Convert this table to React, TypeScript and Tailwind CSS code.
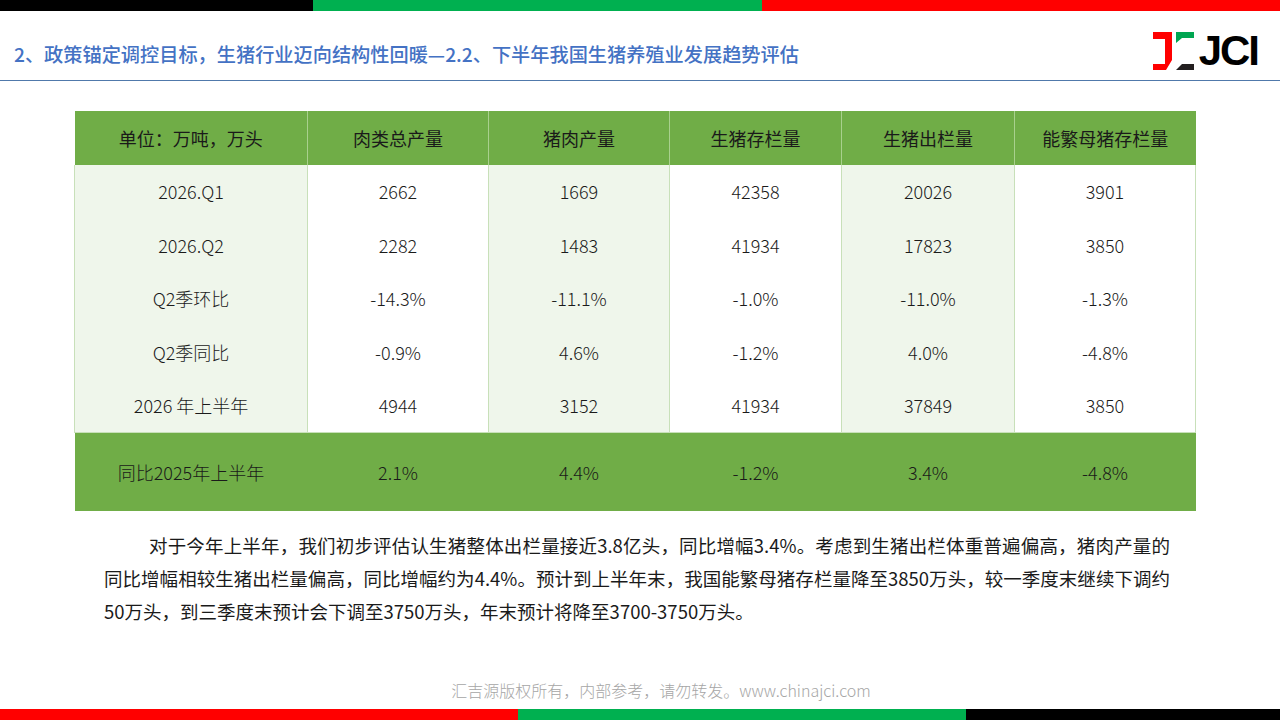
const rows = [
  ["2026.Q1", "2662", "1669", "42358", "20026", "3901"],
  ["2026.Q2", "2282", "1483", "41934", "17823", "3850"],
  ["Q2季环比", "-14.3%", "-11.1%", "-1.0%", "-11.0%", "-1.3%"],
  ["Q2季同比", "-0.9%", "4.6%", "-1.2%", "4.0%", "-4.8%"],
  ["2026 年上半年", "4944", "3152", "41934", "37849", "3850"],
];

const heads = ["单位：万吨，万头", "肉类总产量", "猪肉产量", "生猪存栏量", "生猪出栏量", "能繁母猪存栏量"];
const total = ["同比2025年上半年", "2.1%", "4.4%", "-1.2%", "3.4%", "-4.8%"];
const widths = [233, 181, 181, 172, 173, 181];

const cjk = { fontFamily: '"Noto Sans CJK SC", "Noto Sans", sans-serif' };

function Logo() {
  return (
    <div className="flex items-center gap-[4px]">
      <svg width="42" height="39" viewBox="0 0 42 39">
        <polygon points="0,0 19,0 19,28 13,38 0,38 0,32 12,32 12,7 0,7" fill="#ff0000" />
        <polygon points="23,0 41,0 41,6 29,6 23,11" fill="#00a651" />
        <polygon points="29,32 41,32 41,38 23,38" fill="#231f20" />
      </svg>
      <span
        className="text-[42px] font-bold leading-none tracking-[-2px] text-black"
        style={{ fontFamily: '"Liberation Sans", Arial, sans-serif' }}
      >
        JCI
      </span>
    </div>
  );
}

export default function App() {
  return (
    <div className="w-[1280px] h-[720px] bg-white flex flex-col overflow-hidden" style={cjk}>
      <div className="flex h-[11px] shrink-0">
        <div className="w-[313px] bg-black" />
        <div className="w-[449px] bg-[#00b050]" />
        <div className="flex-1 bg-[#ff0000]" />
      </div>

      <div className="h-[70px] shrink-0 flex justify-between border-b border-[#5079ab]">
        <h1 className="pl-[14px] pt-[29px] text-[19.2px] leading-[28px] font-medium text-[#4472c4]">
          2、政策锚定调控目标，生猪行业迈向结构性回暖—2.2、下半年我国生猪养殖业发展趋势评估
        </h1>
        <div className="pt-[19px] pr-[22px]">
          <Logo />
        </div>
      </div>

      <div className="pl-[74px] pt-[30px]">
        <table className="table-fixed border-collapse w-[1121px] text-[18px] text-[#1a1a1a] font-light">
          <colgroup>
            {widths.map((w, i) => (
              <col key={i} style={{ width: w }} />
            ))}
          </colgroup>
          <thead>
            <tr className="bg-[#70ad47] h-[54px]">
              {heads.map((h, i) => (
                <th
                  key={h}
                  className={
                    "font-normal text-center " +
                    (i < heads.length - 1 ? "border-r border-[#a9d08e]" : "")
                  }
                >
                  {h}
                </th>
              ))}
            </tr>
          </thead>
          <tbody>
            {rows.map((r) => (
              <tr key={r[0]} className="h-[53.6px]">
                {r.map((c, i) => (
                  <td
                    key={i}
                    className={
                      "text-center border-x border-[#c8e0b9] " +
                      (i % 2 === 0 ? "bg-[#eff6eb]" : "bg-white")
                    }
                  >
                    {c}
                  </td>
                ))}
              </tr>
            ))}
            <tr className="h-[78px] bg-[#70ad47] border-t border-[#c8e0b9]">
              {total.map((c, i) => (
                <td key={i} className="text-center">
                  {c}
                </td>
              ))}
            </tr>
          </tbody>
        </table>
      </div>

      <div className="pl-[104px] w-[1170px] pt-[18px] text-[18.5px] leading-[33px] text-[#1a1a1a] text-justify">
        <p className="indent-[45px] [text-align-last:justify]">
          对于今年上半年，我们初步评估认生猪整体出栏量接近3.8亿头，同比增幅3.4%。考虑到生猪出栏体重普遍偏高，猪肉产量的
        </p>
        <p className="[text-align-last:justify]">
          同比增幅相较生猪出栏量偏高，同比增幅约为4.4%。预计到上半年末，我国能繁母猪存栏量降至3850万头，较一季度末继续下调约
        </p>
        <p>50万头，到三季度末预计会下调至3750万头，年末预计将降至3700-3750万头。</p>
      </div>

      <div className="flex-1" />

      <p className="text-center pl-[42px] text-[16px] leading-[20px] font-light text-[#a6a6a6] mb-[9px]">
        汇吉源版权所有，内部参考，请勿转发。www.chinajci.com
      </p>

      <div className="flex h-[11px] shrink-0">
        <div className="w-[518px] bg-[#ff0000]" />
        <div className="w-[448px] bg-[#00b050]" />
        <div className="flex-1 bg-black" />
      </div>
    </div>
  );
}
